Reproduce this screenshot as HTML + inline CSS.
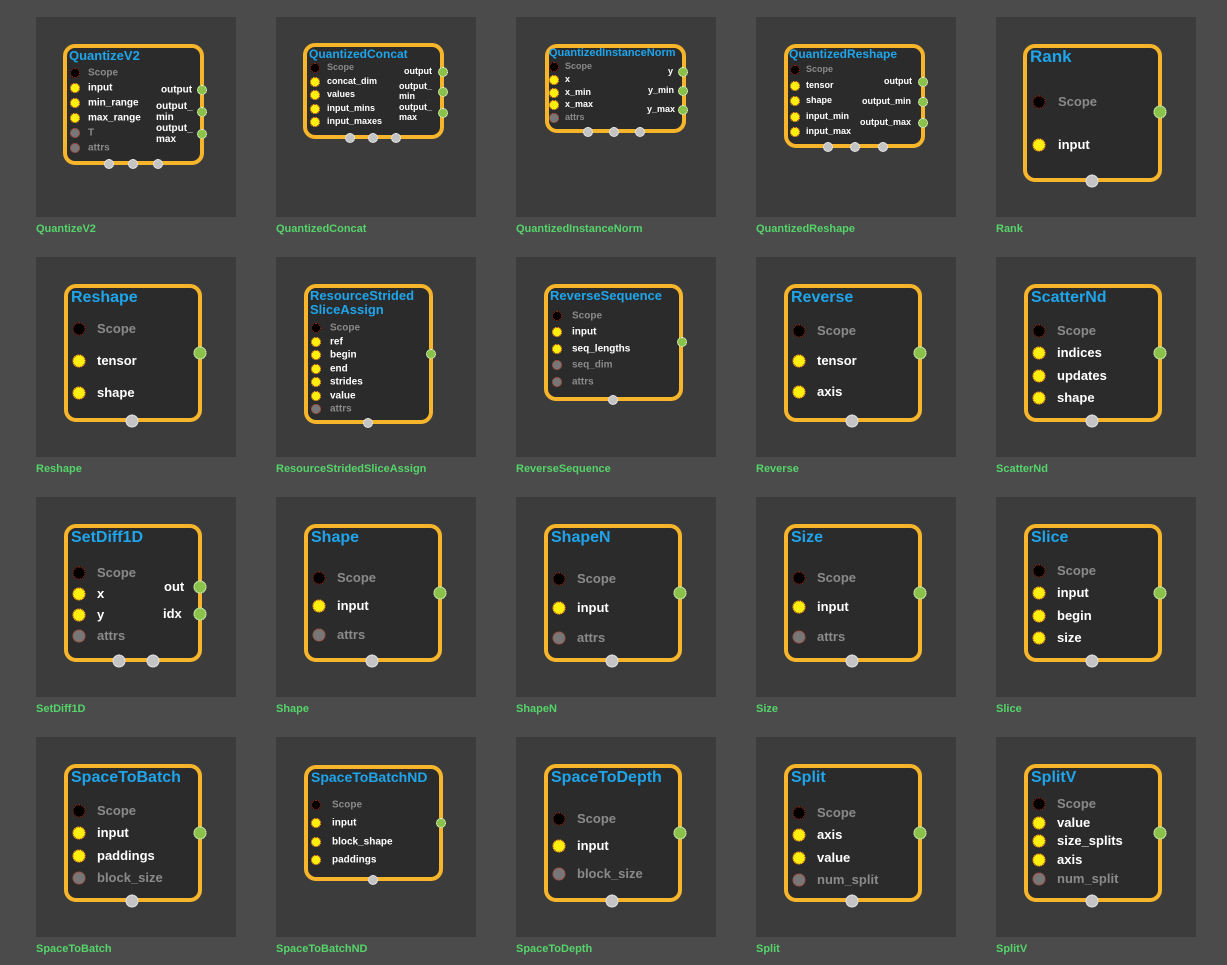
<!DOCTYPE html><html><head><meta charset="utf-8"><style>
body{margin:0;width:1227px;height:965px;background:#4b4b4b;position:relative;overflow:hidden;font-family:"Liberation Sans",Arial,sans-serif;font-weight:bold}
.tile{position:absolute;width:200px;height:200px;background:#3c3c3c}
.lb{position:absolute;color:#55d46a;font-size:11px;line-height:13px}
.b{position:absolute;box-sizing:border-box;border:4px solid #f7b52b;border-radius:12px;background:#2b2b2b}
.h{position:absolute;color:#1ea5ec;line-height:1.05;white-space:nowrap;margin-top:3px}
.t{position:absolute;color:#fff;transform:translateY(-50%);white-space:nowrap;line-height:1.1}
.g{color:#8a8a8a}
.d{position:absolute;border-radius:50%;transform:translate(-50%,-50%);box-sizing:border-box;width:13px;height:13px}
.s{width:10px;height:10px}
.y{background:#ffef0e;border:1px dotted #c0301a}
.k{background:#000;border:1px dotted #c0301a}
.x{background:#777;border:1px dotted #c0301a}
.o{background:#8bc34a;border:1px dotted #fff}
.w{background:#c4c4c4;border:1px dotted #fff}
.f10{font-size:10px}.f9{font-size:9px}.f13{font-size:13px}
</style></head><body>
<div class="tile" style="left:36px;top:17px"></div><div class="tile" style="left:276px;top:17px"></div><div class="tile" style="left:516px;top:17px"></div><div class="tile" style="left:756px;top:17px"></div><div class="tile" style="left:996px;top:17px"></div>
<div class="tile" style="left:36px;top:257px"></div><div class="tile" style="left:276px;top:257px"></div><div class="tile" style="left:516px;top:257px"></div><div class="tile" style="left:756px;top:257px"></div><div class="tile" style="left:996px;top:257px"></div>
<div class="tile" style="left:36px;top:497px"></div><div class="tile" style="left:276px;top:497px"></div><div class="tile" style="left:516px;top:497px"></div><div class="tile" style="left:756px;top:497px"></div><div class="tile" style="left:996px;top:497px"></div>
<div class="tile" style="left:36px;top:737px"></div><div class="tile" style="left:276px;top:737px"></div><div class="tile" style="left:516px;top:737px"></div><div class="tile" style="left:756px;top:737px"></div><div class="tile" style="left:996px;top:737px"></div>
<div class="lb" style="left:36px;top:223px">QuantizeV2</div><div class="lb" style="left:276px;top:223px">QuantizedConcat</div><div class="lb" style="left:516px;top:223px">QuantizedInstanceNorm</div><div class="lb" style="left:756px;top:223px">QuantizedReshape</div><div class="lb" style="left:996px;top:223px">Rank</div>
<div class="lb" style="left:36px;top:463px">Reshape</div><div class="lb" style="left:276px;top:463px">ResourceStridedSliceAssign</div><div class="lb" style="left:516px;top:463px">ReverseSequence</div><div class="lb" style="left:756px;top:463px">Reverse</div><div class="lb" style="left:996px;top:463px">ScatterNd</div>
<div class="lb" style="left:36px;top:703px">SetDiff1D</div><div class="lb" style="left:276px;top:703px">Shape</div><div class="lb" style="left:516px;top:703px">ShapeN</div><div class="lb" style="left:756px;top:703px">Size</div><div class="lb" style="left:996px;top:703px">Slice</div>
<div class="lb" style="left:36px;top:943px">SpaceToBatch</div><div class="lb" style="left:276px;top:943px">SpaceToBatchND</div><div class="lb" style="left:516px;top:943px">SpaceToDepth</div><div class="lb" style="left:756px;top:943px">Split</div><div class="lb" style="left:996px;top:943px">SplitV</div>

<div class="b" style="left:63px;top:44px;width:141px;height:121px"></div>
<div class="h" style="left:69px;top:46px;font-size:13px">QuantizeV2</div>
<div class="d s k" style="left:75px;top:73px"></div><div class="t f10 g" style="left:88px;top:73px">Scope</div>
<div class="d s y" style="left:75px;top:88px"></div><div class="t f10" style="left:88px;top:88px">input</div>
<div class="d s y" style="left:75px;top:103px"></div><div class="t f10" style="left:88px;top:103px">min_range</div>
<div class="d s y" style="left:75px;top:118px"></div><div class="t f10" style="left:88px;top:118px">max_range</div>
<div class="d s x" style="left:75px;top:133px"></div><div class="t f10 g" style="left:88px;top:133px">T</div>
<div class="d s x" style="left:75px;top:148px"></div><div class="t f10 g" style="left:88px;top:148px">attrs</div>
<div class="t f10" style="left:161px;top:90px">output</div><div class="d s o" style="left:202px;top:90px"></div>
<div class="t f10" style="left:156px;top:112px">output_<br>min</div><div class="d s o" style="left:202px;top:112px"></div>
<div class="t f10" style="left:156px;top:134px">output_<br>max</div><div class="d s o" style="left:202px;top:134px"></div>
<div class="d s w" style="left:109px;top:164px"></div><div class="d s w" style="left:133px;top:164px"></div><div class="d s w" style="left:158px;top:164px"></div>

<div class="b" style="left:303px;top:43px;width:141px;height:96px"></div>
<div class="h" style="left:309px;top:45px;font-size:12px">QuantizedConcat</div>
<div class="d s k" style="left:315px;top:68px"></div><div class="t f9 g" style="left:327px;top:68px">Scope</div>
<div class="d s y" style="left:315px;top:82px"></div><div class="t f9" style="left:327px;top:82px">concat_dim</div>
<div class="d s y" style="left:315px;top:95px"></div><div class="t f9" style="left:327px;top:95px">values</div>
<div class="d s y" style="left:315px;top:109px"></div><div class="t f9" style="left:327px;top:109px">input_mins</div>
<div class="d s y" style="left:315px;top:122px"></div><div class="t f9" style="left:327px;top:122px">input_maxes</div>
<div class="t f9" style="left:404px;top:72px">output</div><div class="d s o" style="left:443px;top:72px"></div>
<div class="t f9" style="left:399px;top:92px">output_<br>min</div><div class="d s o" style="left:443px;top:92px"></div>
<div class="t f9" style="left:399px;top:113px">output_<br>max</div><div class="d s o" style="left:443px;top:113px"></div>
<div class="d s w" style="left:350px;top:138px"></div><div class="d s w" style="left:373px;top:138px"></div><div class="d s w" style="left:396px;top:138px"></div>

<div class="b" style="left:545px;top:44px;width:141px;height:89px"></div>
<div class="h" style="left:549px;top:45px;font-size:11px">QuantizedInstanceNorm</div>
<div class="d s k" style="left:554px;top:67px"></div><div class="t f9 g" style="left:565px;top:67px">Scope</div>
<div class="d s y" style="left:554px;top:80px"></div><div class="t f9" style="left:565px;top:80px">x</div>
<div class="d s y" style="left:554px;top:93px"></div><div class="t f9" style="left:565px;top:93px">x_min</div>
<div class="d s y" style="left:554px;top:105px"></div><div class="t f9" style="left:565px;top:105px">x_max</div>
<div class="d s x" style="left:554px;top:118px"></div><div class="t f9 g" style="left:565px;top:118px">attrs</div>
<div class="t f9" style="left:668px;top:72px">y</div><div class="d s o" style="left:683px;top:72px"></div>
<div class="t f9" style="left:648px;top:91px">y_min</div><div class="d s o" style="left:683px;top:91px"></div>
<div class="t f9" style="left:647px;top:110px">y_max</div><div class="d s o" style="left:683px;top:110px"></div>
<div class="d s w" style="left:588px;top:132px"></div><div class="d s w" style="left:614px;top:132px"></div><div class="d s w" style="left:640px;top:132px"></div>

<div class="b" style="left:784px;top:44px;width:141px;height:104px"></div>
<div class="h" style="left:789px;top:45px;font-size:12px">QuantizedReshape</div>
<div class="d s k" style="left:795px;top:70px"></div><div class="t f9 g" style="left:806px;top:70px">Scope</div>
<div class="d s y" style="left:795px;top:86px"></div><div class="t f9" style="left:806px;top:86px">tensor</div>
<div class="d s y" style="left:795px;top:101px"></div><div class="t f9" style="left:806px;top:101px">shape</div>
<div class="d s y" style="left:795px;top:117px"></div><div class="t f9" style="left:806px;top:117px">input_min</div>
<div class="d s y" style="left:795px;top:132px"></div><div class="t f9" style="left:806px;top:132px">input_max</div>
<div class="t f9" style="left:884px;top:82px">output</div><div class="d s o" style="left:923px;top:82px"></div>
<div class="t f9" style="left:862px;top:102px">output_min</div><div class="d s o" style="left:923px;top:102px"></div>
<div class="t f9" style="left:860px;top:123px">output_max</div><div class="d s o" style="left:923px;top:123px"></div>
<div class="d s w" style="left:828px;top:147px"></div><div class="d s w" style="left:855px;top:147px"></div><div class="d s w" style="left:883px;top:147px"></div>

<div class="b" style="left:1023px;top:44px;width:139px;height:138px"></div>
<div class="h" style="left:1030px;top:45px;font-size:17px">Rank</div>
<div class="d k" style="left:1039px;top:102px"></div><div class="t f13 g" style="left:1058px;top:102px">Scope</div>
<div class="d y" style="left:1039px;top:145px"></div><div class="t f13" style="left:1058px;top:145px">input</div>
<div class="d o" style="left:1160px;top:112px"></div>
<div class="d w" style="left:1092px;top:181px"></div>

<div class="b" style="left:64px;top:284px;width:138px;height:138px"></div>
<div class="h" style="left:71px;top:287px;font-size:16px">Reshape</div>
<div class="d k" style="left:79px;top:329px"></div><div class="t f13 g" style="left:97px;top:329px">Scope</div>
<div class="d y" style="left:79px;top:361px"></div><div class="t f13" style="left:97px;top:361px">tensor</div>
<div class="d y" style="left:79px;top:393px"></div><div class="t f13" style="left:97px;top:393px">shape</div>
<div class="d o" style="left:200px;top:353px"></div><div class="d w" style="left:132px;top:421px"></div>

<div class="b" style="left:304px;top:284px;width:129px;height:140px"></div>
<div class="h" style="left:310px;top:286px;font-size:13px">ResourceStrided<br>SliceAssign</div>
<div class="d s k" style="left:316px;top:328px"></div><div class="t f10 g" style="left:330px;top:328px">Scope</div>
<div class="d s y" style="left:316px;top:342px"></div><div class="t f10" style="left:330px;top:342px">ref</div>
<div class="d s y" style="left:316px;top:355px"></div><div class="t f10" style="left:330px;top:355px">begin</div>
<div class="d s y" style="left:316px;top:369px"></div><div class="t f10" style="left:330px;top:369px">end</div>
<div class="d s y" style="left:316px;top:382px"></div><div class="t f10" style="left:330px;top:382px">strides</div>
<div class="d s y" style="left:316px;top:396px"></div><div class="t f10" style="left:330px;top:396px">value</div>
<div class="d s x" style="left:316px;top:409px"></div><div class="t f10 g" style="left:330px;top:409px">attrs</div>
<div class="d s o" style="left:431px;top:354px"></div><div class="d s w" style="left:368px;top:423px"></div>

<div class="b" style="left:544px;top:284px;width:139px;height:117px"></div>
<div class="h" style="left:550px;top:286px;font-size:13px">ReverseSequence</div>
<div class="d s k" style="left:557px;top:316px"></div><div class="t f10 g" style="left:572px;top:316px">Scope</div>
<div class="d s y" style="left:557px;top:332px"></div><div class="t f10" style="left:572px;top:332px">input</div>
<div class="d s y" style="left:557px;top:349px"></div><div class="t f10" style="left:572px;top:349px">seq_lengths</div>
<div class="d s x" style="left:557px;top:365px"></div><div class="t f10 g" style="left:572px;top:365px">seq_dim</div>
<div class="d s x" style="left:557px;top:382px"></div><div class="t f10 g" style="left:572px;top:382px">attrs</div>
<div class="d s o" style="left:682px;top:342px"></div><div class="d s w" style="left:613px;top:400px"></div>

<div class="b" style="left:784px;top:284px;width:138px;height:138px"></div>
<div class="h" style="left:791px;top:287px;font-size:16px">Reverse</div>
<div class="d k" style="left:799px;top:331px"></div><div class="t f13 g" style="left:817px;top:331px">Scope</div>
<div class="d y" style="left:799px;top:361px"></div><div class="t f13" style="left:817px;top:361px">tensor</div>
<div class="d y" style="left:799px;top:392px"></div><div class="t f13" style="left:817px;top:392px">axis</div>
<div class="d o" style="left:920px;top:353px"></div><div class="d w" style="left:852px;top:421px"></div>

<div class="b" style="left:1024px;top:284px;width:138px;height:138px"></div>
<div class="h" style="left:1031px;top:287px;font-size:16px">ScatterNd</div>
<div class="d k" style="left:1039px;top:331px"></div><div class="t f13 g" style="left:1057px;top:331px">Scope</div>
<div class="d y" style="left:1039px;top:353px"></div><div class="t f13" style="left:1057px;top:353px">indices</div>
<div class="d y" style="left:1039px;top:376px"></div><div class="t f13" style="left:1057px;top:376px">updates</div>
<div class="d y" style="left:1039px;top:398px"></div><div class="t f13" style="left:1057px;top:398px">shape</div>
<div class="d o" style="left:1160px;top:353px"></div><div class="d w" style="left:1092px;top:421px"></div>

<div class="b" style="left:64px;top:524px;width:138px;height:138px"></div>
<div class="h" style="left:71px;top:527px;font-size:16px">SetDiff1D</div>
<div class="d k" style="left:79px;top:573px"></div><div class="t f13 g" style="left:97px;top:573px">Scope</div>
<div class="d y" style="left:79px;top:594px"></div><div class="t f13" style="left:97px;top:594px">x</div>
<div class="d y" style="left:79px;top:615px"></div><div class="t f13" style="left:97px;top:615px">y</div>
<div class="d x" style="left:79px;top:636px"></div><div class="t f13 g" style="left:97px;top:636px">attrs</div>
<div class="t f13" style="left:164px;top:587px">out</div><div class="d o" style="left:200px;top:587px"></div>
<div class="t f13" style="left:163px;top:614px">idx</div><div class="d o" style="left:200px;top:614px"></div>
<div class="d w" style="left:119px;top:661px"></div><div class="d w" style="left:153px;top:661px"></div>

<div class="b" style="left:304px;top:524px;width:138px;height:138px"></div>
<div class="h" style="left:311px;top:527px;font-size:16px">Shape</div>
<div class="d k" style="left:319px;top:578px"></div><div class="t f13 g" style="left:337px;top:578px">Scope</div>
<div class="d y" style="left:319px;top:606px"></div><div class="t f13" style="left:337px;top:606px">input</div>
<div class="d x" style="left:319px;top:635px"></div><div class="t f13 g" style="left:337px;top:635px">attrs</div>
<div class="d o" style="left:440px;top:593px"></div><div class="d w" style="left:372px;top:661px"></div>

<div class="b" style="left:544px;top:524px;width:138px;height:138px"></div>
<div class="h" style="left:551px;top:527px;font-size:16px">ShapeN</div>
<div class="d k" style="left:559px;top:579px"></div><div class="t f13 g" style="left:577px;top:579px">Scope</div>
<div class="d y" style="left:559px;top:608px"></div><div class="t f13" style="left:577px;top:608px">input</div>
<div class="d x" style="left:559px;top:638px"></div><div class="t f13 g" style="left:577px;top:638px">attrs</div>
<div class="d o" style="left:680px;top:593px"></div><div class="d w" style="left:612px;top:661px"></div>

<div class="b" style="left:784px;top:524px;width:138px;height:138px"></div>
<div class="h" style="left:791px;top:527px;font-size:16px">Size</div>
<div class="d k" style="left:799px;top:578px"></div><div class="t f13 g" style="left:817px;top:578px">Scope</div>
<div class="d y" style="left:799px;top:607px"></div><div class="t f13" style="left:817px;top:607px">input</div>
<div class="d x" style="left:799px;top:637px"></div><div class="t f13 g" style="left:817px;top:637px">attrs</div>
<div class="d o" style="left:920px;top:593px"></div><div class="d w" style="left:852px;top:661px"></div>

<div class="b" style="left:1024px;top:524px;width:138px;height:138px"></div>
<div class="h" style="left:1031px;top:527px;font-size:16px">Slice</div>
<div class="d k" style="left:1039px;top:571px"></div><div class="t f13 g" style="left:1057px;top:571px">Scope</div>
<div class="d y" style="left:1039px;top:593px"></div><div class="t f13" style="left:1057px;top:593px">input</div>
<div class="d y" style="left:1039px;top:616px"></div><div class="t f13" style="left:1057px;top:616px">begin</div>
<div class="d y" style="left:1039px;top:638px"></div><div class="t f13" style="left:1057px;top:638px">size</div>
<div class="d o" style="left:1160px;top:593px"></div><div class="d w" style="left:1092px;top:661px"></div>

<div class="b" style="left:64px;top:764px;width:138px;height:138px"></div>
<div class="h" style="left:71px;top:767px;font-size:16px">SpaceToBatch</div>
<div class="d k" style="left:79px;top:811px"></div><div class="t f13 g" style="left:97px;top:811px">Scope</div>
<div class="d y" style="left:79px;top:833px"></div><div class="t f13" style="left:97px;top:833px">input</div>
<div class="d y" style="left:79px;top:856px"></div><div class="t f13" style="left:97px;top:856px">paddings</div>
<div class="d x" style="left:79px;top:878px"></div><div class="t f13 g" style="left:97px;top:878px">block_size</div>
<div class="d o" style="left:200px;top:833px"></div><div class="d w" style="left:132px;top:901px"></div>

<div class="b" style="left:304px;top:765px;width:139px;height:116px"></div>
<div class="h" style="left:311px;top:767px;font-size:14px">SpaceToBatchND</div>
<div class="d s k" style="left:316px;top:805px"></div><div class="t f10 g" style="left:332px;top:805px">Scope</div>
<div class="d s y" style="left:316px;top:823px"></div><div class="t f10" style="left:332px;top:823px">input</div>
<div class="d s y" style="left:316px;top:842px"></div><div class="t f10" style="left:332px;top:842px">block_shape</div>
<div class="d s y" style="left:316px;top:860px"></div><div class="t f10" style="left:332px;top:860px">paddings</div>
<div class="d s o" style="left:441px;top:823px"></div><div class="d s w" style="left:373px;top:880px"></div>

<div class="b" style="left:544px;top:764px;width:138px;height:138px"></div>
<div class="h" style="left:551px;top:767px;font-size:16px">SpaceToDepth</div>
<div class="d k" style="left:559px;top:819px"></div><div class="t f13 g" style="left:577px;top:819px">Scope</div>
<div class="d y" style="left:559px;top:846px"></div><div class="t f13" style="left:577px;top:846px">input</div>
<div class="d x" style="left:559px;top:874px"></div><div class="t f13 g" style="left:577px;top:874px">block_size</div>
<div class="d o" style="left:680px;top:833px"></div><div class="d w" style="left:612px;top:901px"></div>

<div class="b" style="left:784px;top:764px;width:138px;height:138px"></div>
<div class="h" style="left:791px;top:767px;font-size:16px">Split</div>
<div class="d k" style="left:799px;top:813px"></div><div class="t f13 g" style="left:817px;top:813px">Scope</div>
<div class="d y" style="left:799px;top:835px"></div><div class="t f13" style="left:817px;top:835px">axis</div>
<div class="d y" style="left:799px;top:858px"></div><div class="t f13" style="left:817px;top:858px">value</div>
<div class="d x" style="left:799px;top:880px"></div><div class="t f13 g" style="left:817px;top:880px">num_split</div>
<div class="d o" style="left:920px;top:833px"></div><div class="d w" style="left:852px;top:901px"></div>

<div class="b" style="left:1024px;top:764px;width:138px;height:138px"></div>
<div class="h" style="left:1031px;top:767px;font-size:16px">SplitV</div>
<div class="d k" style="left:1039px;top:804px"></div><div class="t f13 g" style="left:1057px;top:804px">Scope</div>
<div class="d y" style="left:1039px;top:823px"></div><div class="t f13" style="left:1057px;top:823px">value</div>
<div class="d y" style="left:1039px;top:841px"></div><div class="t f13" style="left:1057px;top:841px">size_splits</div>
<div class="d y" style="left:1039px;top:860px"></div><div class="t f13" style="left:1057px;top:860px">axis</div>
<div class="d x" style="left:1039px;top:879px"></div><div class="t f13 g" style="left:1057px;top:879px">num_split</div>
<div class="d o" style="left:1160px;top:833px"></div><div class="d w" style="left:1092px;top:901px"></div>
</body></html>
